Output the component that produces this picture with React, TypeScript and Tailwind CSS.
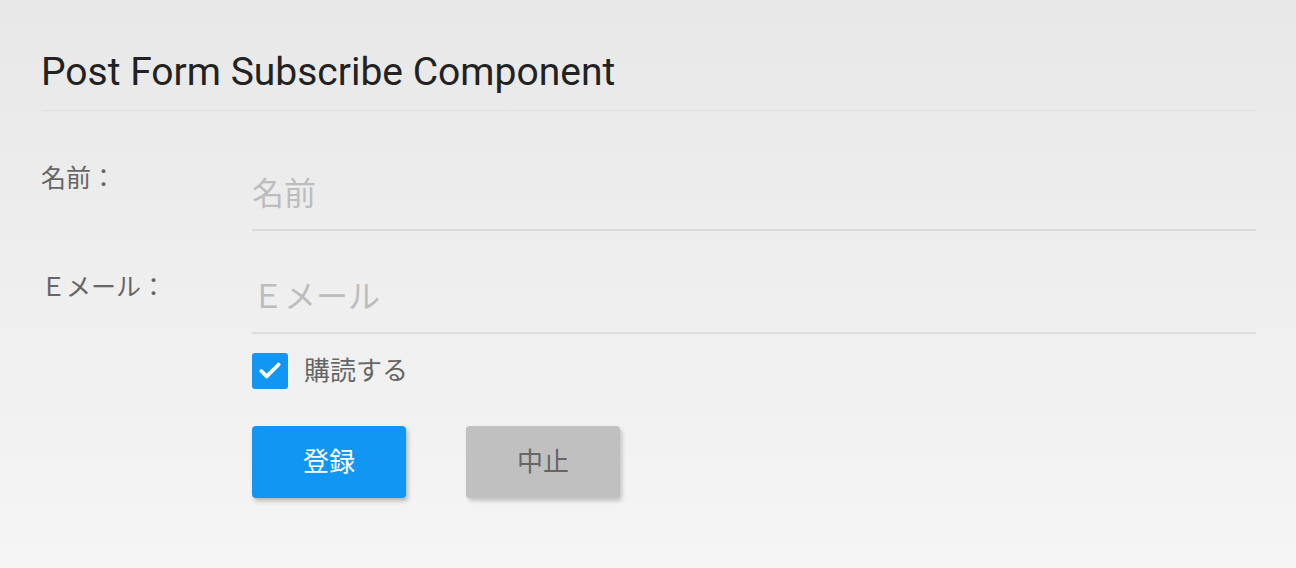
import { Check } from 'lucide-react';

const font = { fontFamily: 'Roboto, "Noto Sans CJK JP", sans-serif' };

export default function App() {
  return (
    <div
      className="h-screen w-full bg-gradient-to-b from-[#e8e8e8] to-[#f5f5f5] pl-[41px] pr-[40px] pt-[49px]"
      style={font}
    >
      <h1 className="border-b border-[#dedede] pb-[14px] text-[39px] font-normal leading-[47px] text-[#222]">
        Post Form Subscribe Component
      </h1>

      <form className="mt-[49px] flex flex-col" onSubmit={(e) => e.preventDefault()}>
        <div className="flex">
          <label className="mt-[4px] w-[211px] shrink-0 text-[25px] leading-[30px] text-[#666]">名前：</label>
          <input
            placeholder="名前"
            className="flex-1 border-b-2 border-[#dcdcdc] bg-transparent pt-[15px] pb-[16px] text-[32px] leading-[38px] text-[#333] outline-none placeholder:text-[#bdbdbd]"
          />
        </div>

        <div className="mt-[32px] flex">
          <label className="mt-[10px] w-[211px] shrink-0 text-[25px] leading-[30px] text-[#666]">Ｅメール：</label>
          <input
            placeholder="Ｅメール"
            className="flex-1 border-b-2 border-[#dcdcdc] bg-transparent pt-[15px] pb-[16px] text-[32px] leading-[38px] text-[#333] outline-none placeholder:text-[#bdbdbd]"
          />
        </div>

        <div className="ml-[211px] mt-[19px] flex items-center gap-[16px]">
          <span className="flex h-[36px] w-[36px] items-center justify-center rounded-[3px] bg-[#1296f3]">
            <Check className="h-[26px] w-[26px] text-white" strokeWidth={3.5} />
          </span>
          <span className="text-[26px] leading-[30px] text-[#666]">購読する</span>
        </div>

        <div className="ml-[211px] mt-[37px] flex gap-[60px]">
          <button className="h-[72px] w-[154px] rounded-[4px] bg-[#1296f3] text-[26px] text-white shadow-[2px_3px_4px_rgba(0,0,0,0.25)]">
            登録
          </button>
          <button
            type="button"
            className="h-[72px] w-[154px] rounded-[4px] bg-[#c0c0c0] text-[26px] text-[#666] shadow-[2px_3px_4px_rgba(0,0,0,0.2)]"
          >
            中止
          </button>
        </div>
      </form>
    </div>
  );
}
